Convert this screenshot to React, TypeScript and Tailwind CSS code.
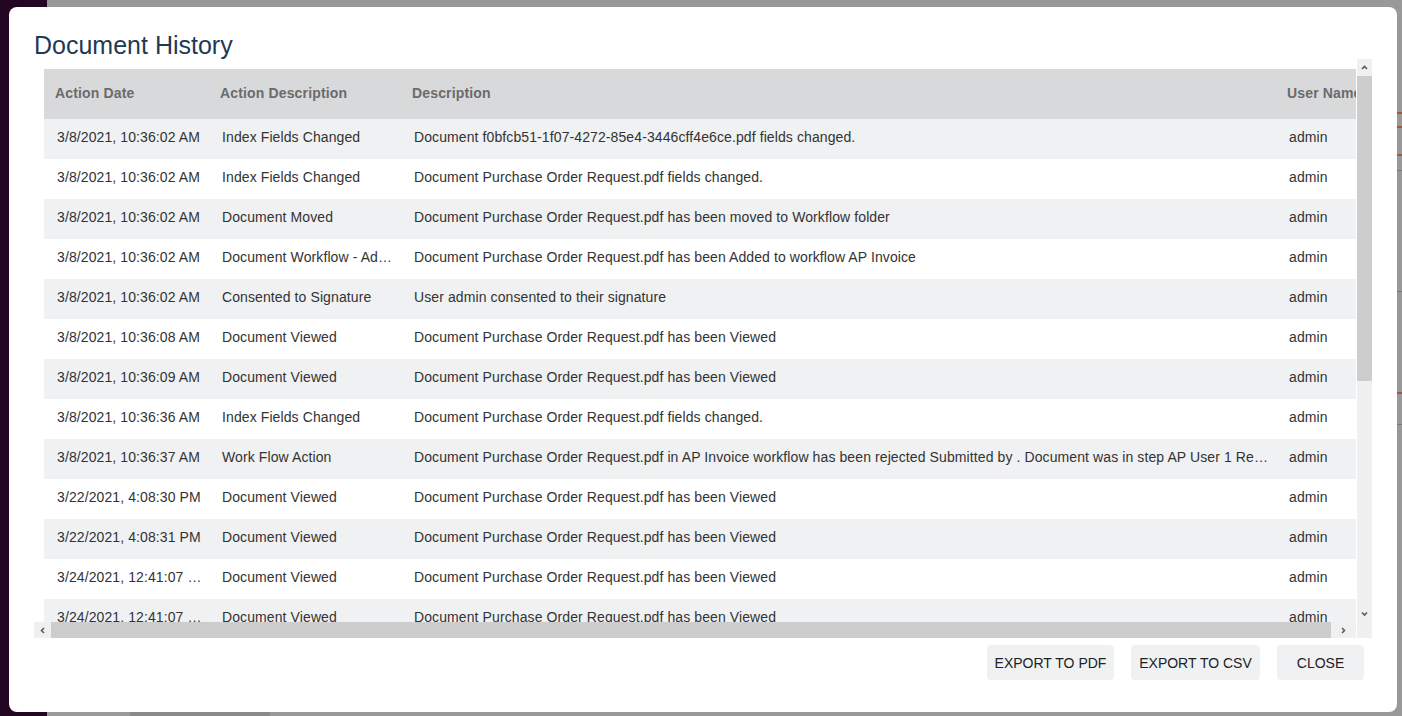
import React from "react";

const ROWS = [
    { date: "3/8/2021, 10:36:02 AM", action: "Index Fields Changed", desc: "Document f0bfcb51-1f07-4272-85e4-3446cff4e6ce.pdf fields changed.", user: "admin" },
    { date: "3/8/2021, 10:36:02 AM", action: "Index Fields Changed", desc: "Document Purchase Order Request.pdf fields changed.", user: "admin" },
    { date: "3/8/2021, 10:36:02 AM", action: "Document Moved", desc: "Document Purchase Order Request.pdf has been moved to Workflow folder", user: "admin" },
    { date: "3/8/2021, 10:36:02 AM", action: "Document Workflow - Added to Workflow", desc: "Document Purchase Order Request.pdf has been Added to workflow AP Invoice", user: "admin" },
    { date: "3/8/2021, 10:36:02 AM", action: "Consented to Signature", desc: "User admin consented to their signature", user: "admin" },
    { date: "3/8/2021, 10:36:08 AM", action: "Document Viewed", desc: "Document Purchase Order Request.pdf has been Viewed", user: "admin" },
    { date: "3/8/2021, 10:36:09 AM", action: "Document Viewed", desc: "Document Purchase Order Request.pdf has been Viewed", user: "admin" },
    { date: "3/8/2021, 10:36:36 AM", action: "Index Fields Changed", desc: "Document Purchase Order Request.pdf fields changed.", user: "admin" },
    { date: "3/8/2021, 10:36:37 AM", action: "Work Flow Action", desc: "Document Purchase Order Request.pdf in AP Invoice workflow has been rejected Submitted by . Document was in step AP User 1 Review Approval", user: "admin" },
    { date: "3/22/2021, 4:08:30 PM", action: "Document Viewed", desc: "Document Purchase Order Request.pdf has been Viewed", user: "admin" },
    { date: "3/22/2021, 4:08:31 PM", action: "Document Viewed", desc: "Document Purchase Order Request.pdf has been Viewed", user: "admin" },
    { date: "3/24/2021, 12:41:07 PM", action: "Document Viewed", desc: "Document Purchase Order Request.pdf has been Viewed", user: "admin" },
    { date: "3/24/2021, 12:41:07 PM", action: "Document Viewed", desc: "Document Purchase Order Request.pdf has been Viewed", user: "admin" },
];

const font = { fontFamily: '"Liberation Sans", Arial, sans-serif' };

function Chevron({ dir }: { dir: "up" | "down" | "left" | "right" }) {
    const pts = {
        up: "2,6 4.5,3.5 7,6",
        down: "2,3.5 4.5,6 7,3.5",
        left: "6,2 3.5,4.5 6,7",
        right: "3,2 5.5,4.5 3,7",
    }[dir];
    return (
        <svg width="9" height="9" viewBox="0 0 9 9">
            <polyline points={pts} fill="none" stroke="#5a5a5a" strokeWidth="1.6" />
        </svg>
    );
}

export default function App() {
    return (
        <div className="relative w-[1402px] h-[716px] overflow-hidden flex bg-[#999999]" style={font}>
            {/* dimmed page underneath */}
            <div className="w-[47px] h-full bg-[#230722]"></div>
            <div className="flex-1 flex flex-col">
                <div className="h-[711px] flex justify-end">
                    <div className="w-[6px] flex flex-col pt-[112px]">
                        <div className="h-[2px] bg-[#9e5a3c] mb-[12px]"></div>
                        <div className="h-[2px] bg-[#9e5a3c] mb-[26px]"></div>
                        <div className="h-[2px] bg-[#9e5a3c] mb-[14px]"></div>
                        <div className="h-[1px] bg-[#7a7a7a] mb-[120px]"></div>
                        <div className="h-[1px] bg-[#7a7a7a] mb-[100px]"></div>
                        <div className="h-[2px] bg-[#9e5a3c] mb-[30px]"></div>
                        <div className="h-[1px] bg-[#7a7a7a]"></div>
                    </div>
                </div>
                <div className="flex-1 flex">
                    <div className="w-[83px] bg-[#9a9a9a]"></div>
                    <div className="w-[140px] bg-[#8a8a8a]"></div>
                    <div className="flex-1 bg-[#999999]"></div>
                </div>
            </div>

            {/* modal */}
            <div className="absolute left-[9px] top-[7px] w-[1388px] h-[705px] bg-white rounded-[8px] flex flex-col pl-[25px] pr-[25px]">
                <h2 className="text-[25px] leading-[28px] text-[#1f3a55] pt-[24px] h-[52px]">Document History</h2>

                <div className="flex flex-col w-[1338px] h-[579px]">
                    <div className="flex h-[563px]">
                        <div className="w-[1322px] overflow-hidden pt-[10px] pl-[10px]">
                            <table className="table-fixed border-collapse w-[1383px] text-[14px] tracking-[0.1px]">
                                <colgroup>
                                    <col className="w-[165px]" />
                                    <col className="w-[192px]" />
                                    <col className="w-[875px]" />
                                    <col className="w-[151px]" />
                                </colgroup>
                                <thead>
                                    <tr className="h-[50px] bg-[#d8d9db]">
                                        {["Action Date", "Action Description", "Description", "User Name"].map((h) => (
                                            <th key={h} className="text-left font-bold text-[#6b6b6b] tracking-[0.15px] pl-[11px] pr-[6px] pb-[2px] whitespace-nowrap overflow-hidden">
                                                {h}
                                            </th>
                                        ))}
                                    </tr>
                                </thead>
                                <tbody>
                                    {ROWS.map((r, i) => (
                                        <tr key={i} className={`h-[40px] ${i % 2 === 0 ? "bg-[#f0f1f2]" : "bg-white"}`}>
                                            <td className="pl-[13px] pr-[6px] pb-[4px] text-[#333333] whitespace-nowrap overflow-hidden text-ellipsis">{r.date}</td>
                                            <td className="pl-[13px] pr-[6px] pb-[4px] text-[#333333] whitespace-nowrap overflow-hidden text-ellipsis">{r.action}</td>
                                            <td className="pl-[13px] pr-[4px] pb-[4px] text-[#333333] whitespace-nowrap overflow-hidden text-ellipsis">{r.desc}</td>
                                            <td className="pl-[13px] pr-[6px] pb-[4px] text-[#333333] whitespace-nowrap overflow-hidden text-ellipsis">{r.user}</td>
                                        </tr>
                                    ))}
                                </tbody>
                            </table>
                        </div>
                        {/* vertical scrollbar */}
                        <div className="w-[16px] pl-[1px] bg-white">
                            <div className="w-[15px] h-full bg-[#f0f0f0] flex flex-col">
                                <div className="h-[17px] flex items-center justify-center">
                                    <Chevron dir="up" />
                                </div>
                                <div className="h-[305px] bg-[#cdcdcd]"></div>
                                <div className="flex-1"></div>
                                <div className="h-[17px] flex items-center justify-center">
                                    <Chevron dir="down" />
                                </div>
                            </div>
                        </div>
                    </div>
                    {/* horizontal scrollbar */}
                    <div className="flex h-[16px]">
                        <div className="w-[1322px] bg-[#f0f0f0] flex">
                            <div className="w-[17px] flex items-center justify-center">
                                <Chevron dir="left" />
                            </div>
                            <div className="w-[1280px] bg-[#cdcdcd]"></div>
                            <div className="flex-1 flex items-center justify-center">
                                <Chevron dir="right" />
                            </div>
                        </div>
                        <div className="w-[16px] pl-[1px] bg-white">
                            <div className="w-[15px] h-full bg-[#f0f0f0]"></div>
                        </div>
                    </div>
                </div>

                <div className="flex justify-end gap-[17px] pt-[7px] pr-[8px]">
                    <button className="w-[127px] h-[35px] pt-[2px] rounded-[4px] bg-[#f0f1f2] text-[14px] text-[#222222] uppercase">Export to PDF</button>
                    <button className="w-[129px] h-[35px] pt-[2px] rounded-[4px] bg-[#f0f1f2] text-[14px] text-[#222222] uppercase">Export to CSV</button>
                    <button className="w-[87px] h-[35px] pt-[2px] rounded-[4px] bg-[#f0f1f2] text-[14px] text-[#222222] uppercase">Close</button>
                </div>
            </div>
        </div>
    );
}
